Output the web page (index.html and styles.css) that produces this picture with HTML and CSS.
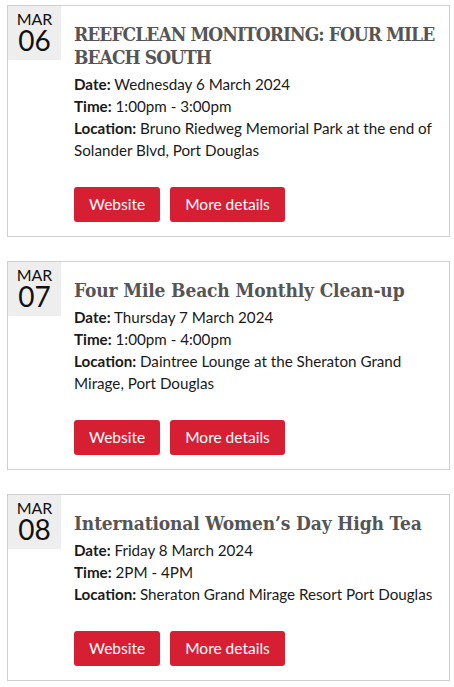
FILE: index.html
```html
<!DOCTYPE html>
<html lang="en">
<head>
<meta charset="utf-8">
<title>Events</title>
<link rel="stylesheet" href="styles.css">
</head>
<body>
<div class="events">
  <article class="event">
    <div class="datebox"><span class="month">MAR</span><span class="day">06</span></div>
    <div class="body">
      <h2 class="title title--caps">REEFCLEAN MONITORING: FOUR MILE BEACH SOUTH</h2>
      <p class="meta"><b>Date:</b> Wednesday 6 March 2024</p>
      <p class="meta"><b>Time:</b> 1:00pm - 3:00pm</p>
      <p class="meta"><b>Location:</b> Bruno Riedweg Memorial Park at the end of Solander Blvd, Port Douglas</p>
      <div class="actions"><a class="btn" href="#">Website</a><a class="btn" href="#">More details</a></div>
    </div>
  </article>
  <article class="event">
    <div class="datebox"><span class="month">MAR</span><span class="day">07</span></div>
    <div class="body">
      <h2 class="title">Four Mile Beach Monthly Clean-up</h2>
      <p class="meta"><b>Date:</b> Thursday 7 March 2024</p>
      <p class="meta"><b>Time:</b> 1:00pm - 4:00pm</p>
      <p class="meta"><b>Location:</b> Daintree Lounge at the Sheraton Grand Mirage, Port Douglas</p>
      <div class="actions"><a class="btn" href="#">Website</a><a class="btn" href="#">More details</a></div>
    </div>
  </article>
  <article class="event">
    <div class="datebox"><span class="month">MAR</span><span class="day">08</span></div>
    <div class="body">
      <h2 class="title">International Women’s Day High Tea</h2>
      <p class="meta"><b>Date:</b> Friday 8 March 2024</p>
      <p class="meta"><b>Time:</b> 2PM - 4PM</p>
      <p class="meta"><b>Location:</b> Sheraton Grand Mirage Resort Port Douglas</p>
      <div class="actions"><a class="btn" href="#">Website</a><a class="btn" href="#">More details</a></div>
    </div>
  </article>
</div>
</body>
</html>
```
FILE: styles.css
```css
html, body {
  margin: 0;
  background: #fff;
}
body {
  padding: 5px 4px 0 7px;
  font-family: Lato, "Noto Sans", sans-serif;
  color: #1a1a1a;
}
.events {
  display: flex;
  flex-direction: column;
  gap: 24px;
}
.event {
  display: flex;
  align-items: flex-start;
  border: 1px solid #cfcfcf;
  padding-bottom: 14px;
}
.datebox {
  flex: 0 0 53px;
  height: 54px;
  background: #eeeeee;
  display: flex;
  flex-direction: column;
  align-items: center;
  color: #111;
}
.month {
  font-size: 16px;
  line-height: 16px;
  margin-top: 5px;
}
.day {
  font-size: 28px;
  line-height: 26px;
}
.body {
  flex: 1;
  min-width: 0;
  padding: 17px 6px 0 13px;
}
.title {
  margin: 0 0 4px;
  font-family: "DejaVu Serif Condensed", "DejaVu Serif", serif;
  font-weight: bold;
  font-size: 19px;
  letter-spacing: -0.15px;
  line-height: 23px;
  color: #555555;
}
.title--caps {
  letter-spacing: -0.95px;
}
.meta {
  margin: 0;
  font-size: 15.2px;
  line-height: 22px;
}
.meta b {
  font-weight: bold;
}
.actions {
  display: flex;
  gap: 10px;
  margin-top: 26px;
}
.btn {
  display: inline-block;
  background: #d71f33;
  color: #fff;
  text-decoration: none;
  font-size: 15.5px;
  line-height: 35px;
  height: 35px;
  padding: 0 15px;
  border-radius: 3px;
}
```
